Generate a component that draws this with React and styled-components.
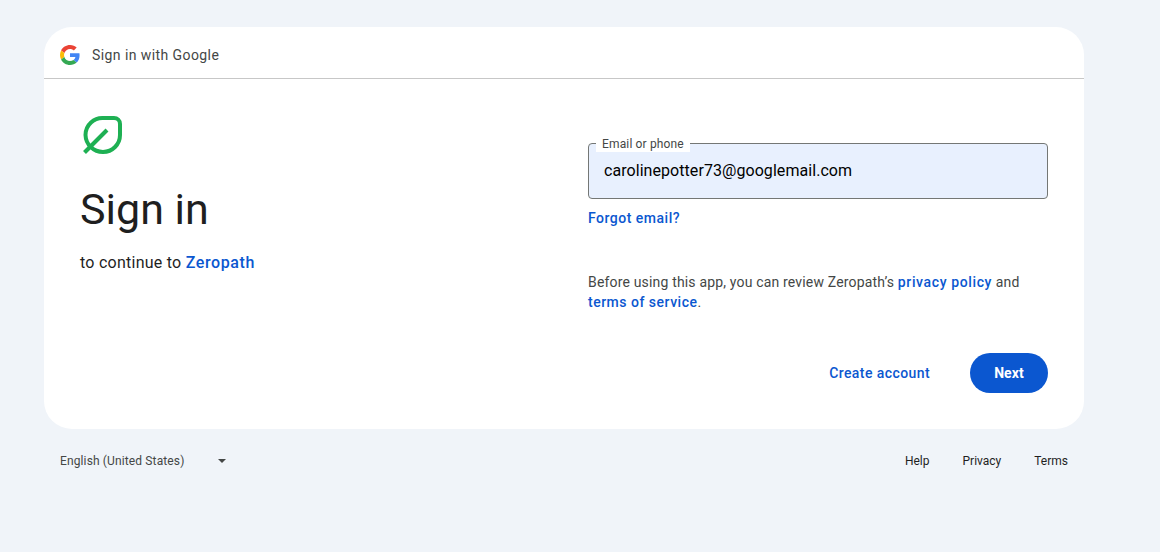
import React from 'react'
import styled, { createGlobalStyle } from 'styled-components'

const GlobalStyle = createGlobalStyle`
  html, body {
    margin: 0;
    padding: 0;
    height: 100%;
    background: #f0f4f9;
    font-family: Roboto, "Liberation Sans", sans-serif;
  }
`

const Page = styled.div`
  width: 1160px;
  height: 552px;
  padding: 27px 0 0 44px;
  box-sizing: border-box;
  overflow: hidden;
`

const Card = styled.main`
  width: 1040px;
  height: 402px;
  background: #fff;
  border-radius: 28px;
  display: flex;
  flex-direction: column;
`

const CardHeader = styled.header`
  height: 52px;
  box-sizing: border-box;
  border-bottom: 1px solid #c7c7c7;
  display: flex;
  align-items: center;
  gap: 12px;
  padding: 5px 0 0 16px;
  color: #444746;
  font-size: 14px;
  letter-spacing: 0.42px;
`

const CardBody = styled.div`
  flex: 1;
  display: flex;
  justify-content: space-between;
  padding: 33px 36px 36px;
`

const LeftColumn = styled.section`
  display: flex;
  flex-direction: column;
  align-items: flex-start;
`

const Heading = styled.h1`
  margin: 27px 0 0;
  font-size: 43px;
  line-height: 52px;
  font-weight: 400;
  color: #1f1f1f;
`

const Subtitle = styled.p`
  margin: 16px 0 0;
  font-size: 16px;
  line-height: 24px;
  letter-spacing: 0.25px;
  color: #1f1f1f;
`

const TextLink = styled.a`
  color: #0b57d0;
  font-size: ${({ $size }) => $size || 14}px;
  font-weight: 500;
  letter-spacing: ${({ $spacing }) => $spacing || 0.5}px;
  text-decoration: none;
`

const RightColumn = styled.section`
  width: 460px;
  padding-top: 31px;
  display: flex;
  flex-direction: column;
  align-items: flex-start;
`

const Field = styled.div`
  position: relative;
  width: 100%;
  height: 56px;
  box-sizing: border-box;
  border: 1px solid #747775;
  border-radius: 4px;
  background: #e8f0fe;
  padding: 0 0 2px 15px;
  display: flex;
  align-items: center;
  font-size: 16px;
  letter-spacing: 0.06px;
  color: #000;
`

const FieldLabel = styled.span`
  position: absolute;
  top: -8px;
  left: 7px;
  padding: 0 6px;
  background: #fff;
  font-size: 12px;
  line-height: 16px;
  letter-spacing: 0.15px;
  color: #444746;
`

const ForgotRow = styled.div`
  margin-top: 9px;
  line-height: 20px;
`

const Notice = styled.p`
  margin: 44px 0 0;
  font-size: 14px;
  line-height: 20px;
  letter-spacing: 0.17px;
  color: #444746;
  width: 100%;
`

const Actions = styled.div`
  margin-top: 41px;
  width: 100%;
  display: flex;
  justify-content: flex-end;
  align-items: center;
  gap: 40px;
`

const NextButton = styled.button`
  width: 78px;
  height: 40px;
  border: 0;
  border-radius: 20px;
  background: #0b57d0;
  color: #fff;
  font-family: inherit;
  font-size: 14px;
  font-weight: 700;
  letter-spacing: 0.1px;
`

const Footer = styled.footer`
  width: 1040px;
  height: 64px;
  padding: 0 16px;
  box-sizing: border-box;
  display: flex;
  justify-content: space-between;
  align-items: center;
  font-size: 12px;
  color: #1f1f1f;
`

const LanguagePicker = styled.div`
  width: 168px;
  display: flex;
  justify-content: space-between;
  align-items: center;
  letter-spacing: 0.13px;
  color: #444746;
`

const Caret = styled.span`
  width: 0;
  height: 0;
  margin-right: 2px;
  border-left: 4px solid transparent;
  border-right: 4px solid transparent;
  border-top: 4px solid #444746;
`

const FooterLinks = styled.nav`
  display: flex;
  gap: 33px;
`

const GoogleLogo = () => (
  <svg width="20" height="20" viewBox="0 0 48 48">
    <path fill="#EA4335" d="M24 9.5c3.54 0 6.71 1.22 9.21 3.6l6.85-6.85C35.9 2.38 30.47 0 24 0 14.62 0 6.51 5.38 2.56 13.22l7.98 6.19C12.43 13.72 17.74 9.5 24 9.5z" />
    <path fill="#4285F4" d="M46.98 24.55c0-1.57-.15-3.09-.38-4.55H24v9.02h12.94c-.58 2.96-2.26 5.48-4.78 7.18l7.73 6c4.51-4.18 7.09-10.36 7.09-17.65z" />
    <path fill="#FBBC05" d="M10.53 28.59c-.48-1.45-.76-2.99-.76-4.59s.27-3.14.76-4.59l-7.98-6.19C.92 16.46 0 20.12 0 24c0 3.88.92 7.54 2.56 10.78l7.97-6.19z" />
    <path fill="#34A853" d="M24 48c6.48 0 11.93-2.13 15.89-5.81l-7.73-6c-2.15 1.45-4.92 2.3-8.16 2.3-6.26 0-11.57-4.22-13.47-9.91l-7.98 6.19C6.51 42.62 14.62 48 24 48z" />
  </svg>
)

const LeafLogo = () => (
  <svg width="44" height="44" viewBox="0 0 44 44" fill="none" stroke="#1eb053" strokeWidth="4" style={{ display: 'block' }}>
    <path d="M24 6H34a6 6 0 0 1 6 6V23A17 17 0 0 1 23 40 17.5 17.5 0 0 1 5.5 23 17 17 0 0 1 24 6Z" />
    <path d="M4.5 40.5L27 18" />
  </svg>
)

const App = () => (
  <Page>
    <GlobalStyle />
    <Card>
      <CardHeader>
        <GoogleLogo />
        Sign in with Google
      </CardHeader>
      <CardBody>
        <LeftColumn>
          <LeafLogo />
          <Heading>Sign in</Heading>
          <Subtitle>
            to continue to <TextLink $size={16} $spacing={0.6} href="#">Zeropath</TextLink>
          </Subtitle>
        </LeftColumn>
        <RightColumn>
          <Field>
            <FieldLabel>Email or phone</FieldLabel>
            carolinepotter73@googlemail.com
          </Field>
          <ForgotRow>
            <TextLink href="#">Forgot email?</TextLink>
          </ForgotRow>
          <Notice>
            Before using this app, you can review Zeropath’s <TextLink $spacing={0.62} href="#">privacy policy</TextLink> and{' '}
            <TextLink href="#">terms of service</TextLink>.
          </Notice>
          <Actions>
            <TextLink $spacing={0.42} href="#">Create account</TextLink>
            <NextButton>Next</NextButton>
          </Actions>
        </RightColumn>
      </CardBody>
    </Card>
    <Footer>
      <LanguagePicker>
        English (United States)
        <Caret />
      </LanguagePicker>
      <FooterLinks>
        <span>Help</span>
        <span>Privacy</span>
        <span>Terms</span>
      </FooterLinks>
    </Footer>
  </Page>
)

export default App
